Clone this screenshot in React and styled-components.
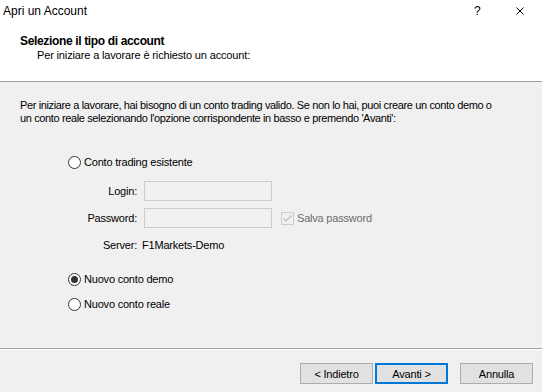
import styled, { createGlobalStyle } from "styled-components";

const GlobalStyle = createGlobalStyle`
  html, body {
    margin: 0;
    padding: 0;
    background: #f0f0f0;
  }
  * {
    box-sizing: border-box;
  }
`;

const Window = styled.div`
  width: 542px;
  height: 392px;
  display: flex;
  flex-direction: column;
  background: #f0f0f0;
  color: #000;
  font-family: "Liberation Sans", Arial, sans-serif;
  font-size: 11px;
  letter-spacing: -0.2px;
  overflow: hidden;
`;

const Header = styled.div`
  height: 82px;
  background: #fff;
  border-bottom: 1px solid #a0a0a0;
`;

const TitleBar = styled.div`
  height: 22px;
  display: flex;
  align-items: center;
  padding-left: 3px;
  font-size: 12px;
  letter-spacing: 0;
`;

const TitleText = styled.span`
  flex: 1;
`;

const Help = styled.span`
  width: 10px;
  margin-right: 32px;
`;

const CloseIcon = styled.svg`
  width: 8px;
  height: 8px;
  margin-right: 18px;
`;

const Heading = styled.div`
  margin-top: 12px;
  padding-left: 20px;
  line-height: 14px;
  font-weight: bold;
  font-size: 12px;
  letter-spacing: -0.35px;
`;

const SubHeading = styled.div`
  padding-left: 37px;
  line-height: 14px;
  letter-spacing: -0.15px;
`;

const Body = styled.div`
  flex: 1;
  padding: 17px 0 0 20px;
`;

const Intro = styled.p`
  margin: 0;
  line-height: 13px;
  white-space: nowrap;
  letter-spacing: -0.37px;
`;

const Form = styled.div`
  margin-top: 29px;
  padding-left: 48px;
  display: flex;
  flex-direction: column;
`;

const RadioRow = styled.label`
  height: 16px;
  display: flex;
  align-items: center;
  gap: 3px;
  margin-top: ${(p) => p.$gap || 0}px;
`;

const RadioDot = styled.span`
  width: 13px;
  height: 13px;
  border-radius: 50%;
  border: 1px solid #333;
  background: #fff;
  display: flex;
  align-items: center;
  justify-content: center;
  &::after {
    content: "";
    width: 7px;
    height: 7px;
    border-radius: 50%;
    background: ${(p) => (p.$checked ? "#333" : "transparent")};
  }
`;

const FieldRow = styled.div`
  display: grid;
  grid-template-columns: 69px 128px auto;
  column-gap: 7px;
  align-items: center;
  min-height: 16px;
  margin-top: ${(p) => p.$gap || 0}px;
`;

const FieldLabel = styled.span`
  text-align: right;
`;

const Input = styled.div`
  height: 20px;
  border: 1px solid #cccccc;
  background: #f0f0f0;
`;

const ServerValue = styled.span`
  margin-left: -2px;
`;

const CheckWrap = styled.span`
  display: flex;
  align-items: center;
  gap: 3px;
  margin-left: 2px;
  color: #6d6d6d;
`;

const CheckBox = styled.svg`
  width: 13px;
  height: 13px;
`;

const Footer = styled.div`
  height: 44px;
  border-top: 1px solid #a0a0a0;
  box-shadow: inset 0 1px 0 #fff;
  display: flex;
  justify-content: flex-end;
  align-items: flex-start;
  padding: 14px 9px 0 0;
`;

const Button = styled.div`
  width: 73px;
  height: 21px;
  display: flex;
  align-items: center;
  justify-content: center;
  background: #e1e1e1;
  border: ${(p) => (p.$primary ? "2px solid #0078d7" : "1px solid #adadad")};
  margin-left: ${(p) => p.$gap || 0}px;
`;

export default function App() {
  return (
    <Window>
      <GlobalStyle />
      <Header>
        <TitleBar>
          <TitleText>Apri un Account</TitleText>
          <Help>?</Help>
          <CloseIcon viewBox="0 0 8 8">
            <path d="M0.5 0.5 L7.5 7.5 M7.5 0.5 L0.5 7.5" stroke="#000" strokeWidth="1" fill="none" />
          </CloseIcon>
        </TitleBar>
        <Heading>Selezione il tipo di account</Heading>
        <SubHeading>Per iniziare a lavorare è richiesto un account:</SubHeading>
      </Header>
      <Body>
        <Intro>
          Per iniziare a lavorare, hai bisogno di un conto trading valido. Se non lo hai, puoi creare un conto demo o
          <br />
          un conto reale selezionando l'opzione corrispondente in basso e premendo 'Avanti':
        </Intro>
        <Form>
          <RadioRow>
            <RadioDot />
            Conto trading esistente
          </RadioRow>
          <FieldRow $gap={11}>
            <FieldLabel>Login:</FieldLabel>
            <Input />
          </FieldRow>
          <FieldRow $gap={7}>
            <FieldLabel>Password:</FieldLabel>
            <Input />
            <CheckWrap>
              <CheckBox viewBox="0 0 13 13">
                <rect x="0.5" y="0.5" width="12" height="12" fill="#f0f0f0" stroke="#cccccc" />
                <path d="M2.5 6.5 L5 9 L10.5 3.5" stroke="#bcbcbc" strokeWidth="1.2" fill="none" />
              </CheckBox>
              Salva password
            </CheckWrap>
          </FieldRow>
          <FieldRow $gap={9}>
            <FieldLabel>Server:</FieldLabel>
            <ServerValue>F1Markets-Demo</ServerValue>
          </FieldRow>
          <RadioRow $gap={18}>
            <RadioDot $checked />
            Nuovo conto demo
          </RadioRow>
          <RadioRow $gap={9}>
            <RadioDot />
            Nuovo conto reale
          </RadioRow>
        </Form>
      </Body>
      <Footer>
        <Button>&lt; Indietro</Button>
        <Button $primary $gap={2}>Avanti &gt;</Button>
        <Button $gap={12}>Annulla</Button>
      </Footer>
    </Window>
  );
}
